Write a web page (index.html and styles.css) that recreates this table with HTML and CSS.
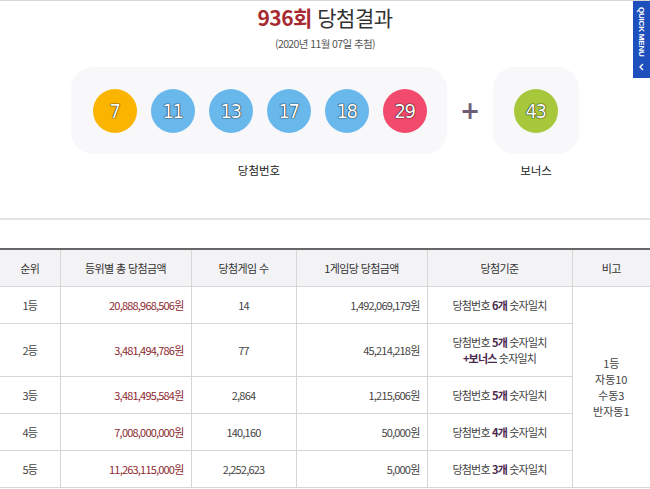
FILE: index.html
```html
<!DOCTYPE html>
<html lang="ko">
<head>
<meta charset="utf-8">
<title>936회 당첨결과</title>
<link rel="stylesheet" href="styles.css">
</head>
<body>
<div class="page">
  <div class="quick">
    <span class="quick-text">QUICK MENU</span>
    <svg class="quick-arrow" width="7" height="8" viewBox="0 0 7 8"><path d="M5 1 L2 4 L5 7" fill="none" stroke="#fff" stroke-width="1.4"/></svg>
  </div>
  <h2 class="title"><strong>936회</strong> 당첨결과</h2>
  <p class="date">(2020년 11월 07일 추첨)</p>

  <div class="result">
    <div class="group">
      <div class="panel main">
        <span class="ball y">7</span>
        <span class="ball b">11</span>
        <span class="ball b">13</span>
        <span class="ball b">17</span>
        <span class="ball b">18</span>
        <span class="ball r">29</span>
      </div>
      <p class="label">당첨번호</p>
    </div>
    <div class="plus">+</div>
    <div class="group">
      <div class="panel bonus">
        <span class="ball g">43</span>
      </div>
      <p class="label">보너스</p>
    </div>
  </div>

  <hr class="divider">

  <table class="tbl">
    <colgroup>
      <col class="c1"><col class="c2"><col class="c3"><col class="c4"><col class="c5"><col class="c6">
    </colgroup>
    <thead>
      <tr><th>순위</th><th>등위별 총 당첨금액</th><th>당첨게임 수</th><th>1게임당 당첨금액</th><th>당첨기준</th><th class="last">비고</th></tr>
    </thead>
    <tbody>
      <tr>
        <td>1등</td><td class="amt">20,888,968,506원</td><td>14</td><td class="num">1,492,069,179원</td><td>당첨번호 <b>6개</b> 숫자일치</td>
        <td class="last note" rowspan="5">1등<br>자동10<br>수동3<br>반자동1</td>
      </tr>
      <tr class="tall">
        <td>2등</td><td class="amt">3,481,494,786원</td><td>77</td><td class="num">45,214,218원</td><td>당첨번호 <b>5개</b> 숫자일치<br><b>+보너스</b> 숫자일치</td>
      </tr>
      <tr>
        <td>3등</td><td class="amt">3,481,495,584원</td><td>2,864</td><td class="num">1,215,606원</td><td>당첨번호 <b>5개</b> 숫자일치</td>
      </tr>
      <tr>
        <td>4등</td><td class="amt">7,008,000,000원</td><td>140,160</td><td class="num">50,000원</td><td>당첨번호 <b>4개</b> 숫자일치</td>
      </tr>
      <tr>
        <td>5등</td><td class="amt">11,263,115,000원</td><td>2,252,623</td><td class="num">5,000원</td><td>당첨번호 <b>3개</b> 숫자일치</td>
      </tr>
    </tbody>
  </table>
</div>
</body>
</html>
```

FILE: styles.css
```css
html, body {
  margin: 0;
  padding: 0;
  background: #fff;
}
body {
  font-family: "Noto Sans CJK KR", "Noto Sans", sans-serif;
  color: #333;
  overflow: hidden;
}
.page {
  position: relative;
  width: 650px;
  height: 489px;
  border-top: 1px solid #d6d6d6;
  box-sizing: border-box;
}
.quick {
  position: absolute;
  top: 0;
  right: 0;
  width: 17px;
  height: 77px;
  background: #1d4fbd;
  display: flex;
  flex-direction: column;
  align-items: center;
  padding-top: 6px;
  box-sizing: border-box;
  gap: 6px;
}
.quick-text {
  writing-mode: vertical-rl;
  color: #fff;
  font-family: "Liberation Sans", sans-serif;
  font-weight: bold;
  font-size: 8px;
  letter-spacing: -0.2px;
}
.title {
  margin: 0;
  padding-top: 3px;
  text-align: center;
  font-size: 21px;
  line-height: 26px;
  font-weight: normal;
  color: #333;
  letter-spacing: -0.5px;
}
.title strong {
  color: #a62a2f;
  font-weight: bold;
}
.date {
  margin: 7px 0 0;
  text-align: center;
  font-size: 10.5px;
  line-height: 14px;
  color: #555;
  letter-spacing: -0.6px;
}
.result {
  display: flex;
  justify-content: center;
  align-items: flex-start;
  margin-top: 16px;
}
.group {
  display: flex;
  flex-direction: column;
  align-items: center;
}
.panel {
  background: #f8f7fa;
  border-radius: 22px;
  height: 87px;
  display: flex;
  align-items: center;
  box-sizing: border-box;
}
.main {
  width: 376px;
  padding-left: 22px;
  gap: 14px;
}
.bonus {
  width: 86px;
  justify-content: center;
}
.plus {
  width: 46px;
  height: 87px;
  display: flex;
  align-items: center;
  justify-content: center;
  font-family: "DejaVu Sans", sans-serif;
  font-size: 24px;
  font-weight: bold;
  color: #6e5c78;
}
.ball {
  width: 44px;
  height: 44px;
  border-radius: 50%;
  display: flex;
  align-items: center;
  justify-content: center;
  font-family: "DejaVu Sans Condensed", "DejaVu Sans", sans-serif;
  font-size: 20px;
  font-weight: normal;
  letter-spacing: -1.5px;
  padding-right: 1px;
  box-sizing: border-box;
  color: #fff;
  text-shadow: 0 0 1px rgba(0,0,0,0.85), 0 0 1px rgba(0,0,0,0.85), 0 0 2px rgba(0,0,0,0.3);
  flex: none;
}
.ball.y { background: #fbb500; }
.ball.b { background: #69b8ec; }
.ball.r { background: #f14a6c; }
.ball.g { background: #a8c83b; }
.label {
  margin: 9px 0 0;
  font-size: 11.5px;
  line-height: 14px;
  color: #222;
  font-weight: 400;
}
.divider {
  margin: 41px 0 0;
  border: 0;
  height: 2px;
  background: #e4e4e4;
}
.tbl {
  margin-top: 28px;
  width: 650px;
  border-collapse: collapse;
  table-layout: fixed;
  font-size: 11px;
  letter-spacing: -0.8px;
  color: #444;
}
.c1 { width: 60px; }
.c2 { width: 131px; }
.c3 { width: 105px; }
.c4 { width: 131px; }
.c5 { width: 145px; }
.c6 { width: 78px; }
.tbl th {
  height: 37px;
  padding: 0;
  background: #f3f2f5;
  font-weight: normal;
  color: #333;
  border-top: 2px solid #666;
  border-bottom: 1px solid #d6d6d6;
  border-right: 1px solid #d6d6d6;
  box-sizing: border-box;
  letter-spacing: -0.6px;
}
.tbl td {
  height: 37px;
  padding: 0;
  text-align: center;
  border-bottom: 1px solid #d6d6d6;
  border-right: 1px solid #d6d6d6;
  line-height: 16px;
  box-sizing: border-box;
}
.tbl .last { border-right: 0; }
.tbl tr.tall td { height: 53px; }
.tbl td.amt {
  text-align: right;
  padding-right: 7px;
  color: #8c2a30;
}
.tbl td.num {
  text-align: right;
  padding-right: 7px;
}
.tbl td b {
  font-weight: bold;
  color: #4a2a4e;
}
.tbl td.note {
  line-height: 16px;
  letter-spacing: 0;
}
```
